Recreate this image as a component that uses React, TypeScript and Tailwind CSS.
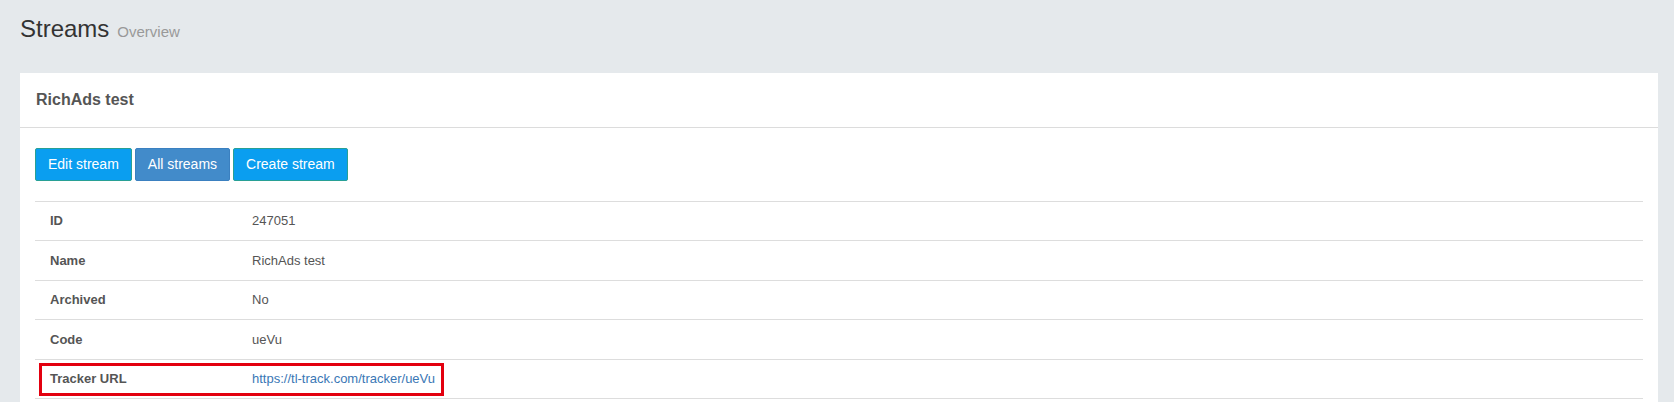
import React from "react";

const rows: { label: string; value: string; link?: boolean; h: string }[] = [
  { label: "ID", value: "247051", h: "h-[39px]" },
  { label: "Name", value: "RichAds test", h: "h-[40px]" },
  { label: "Archived", value: "No", h: "h-[39px]" },
  { label: "Code", value: "ueVu", h: "h-[40px]" },
  { label: "Tracker URL", value: "https://tl-track.com/tracker/ueVu", link: true, h: "h-[39px]" },
];

export default function App() {
  return (
    <div
      className="h-[402px] overflow-hidden bg-[#e5e9ec] pl-[20px] pr-[16px] pt-[14px]"
      style={{ fontFamily: '"Liberation Sans", Arial, sans-serif' }}
    >
      <div className="flex h-[30px] items-baseline gap-[8px] overflow-visible leading-[30px]">
        <span className="text-[24px] text-[#333]">Streams</span>
        <span className="text-[15px] text-[#999]">Overview</span>
      </div>
      <div className="mt-[29px] bg-white">
        <div className="flex h-[55px] items-center border-b border-[#dcdcdc] px-[16px]">
          <span className="text-[16px] font-bold text-[#555]">RichAds test</span>
        </div>
        <div className="px-[15px] pb-[20px] pt-[20px]">
          <div className="flex gap-[3px]">
            <button className="rounded-[2px] border border-[#28a095] bg-[#0a9ef0] px-[12px] py-[6px] text-[14px] leading-[19px] text-white">
              Edit stream
            </button>
            <button className="rounded-[2px] border border-[#3b80c0] bg-[#428bca] px-[12px] py-[6px] text-[14px] leading-[19px] text-white">
              All streams
            </button>
            <button className="rounded-[2px] border border-[#28a095] bg-[#0a9ef0] px-[12px] py-[6px] text-[14px] leading-[19px] text-white">
              Create stream
            </button>
          </div>
          <div className="relative mt-[20px] border-b border-[#dddddd]">
            {rows.map((r) => (
              <div key={r.label} className={`flex items-center border-t border-[#dddddd] ${r.h}`}>
                <div className="w-[202px] pl-[15px] text-[13px] font-bold text-[#555]">{r.label}</div>
                <div className={`pl-[15px] text-[13px] ${r.link ? "text-[#3a77b5]" : "text-[#555]"}`}>{r.value}</div>
              </div>
            ))}
            <div className="pointer-events-none absolute left-[4px] top-[162px] h-[33px] w-[405px] border-[3px] border-[#e3000f]" />
          </div>
        </div>
      </div>
    </div>
  );
}
